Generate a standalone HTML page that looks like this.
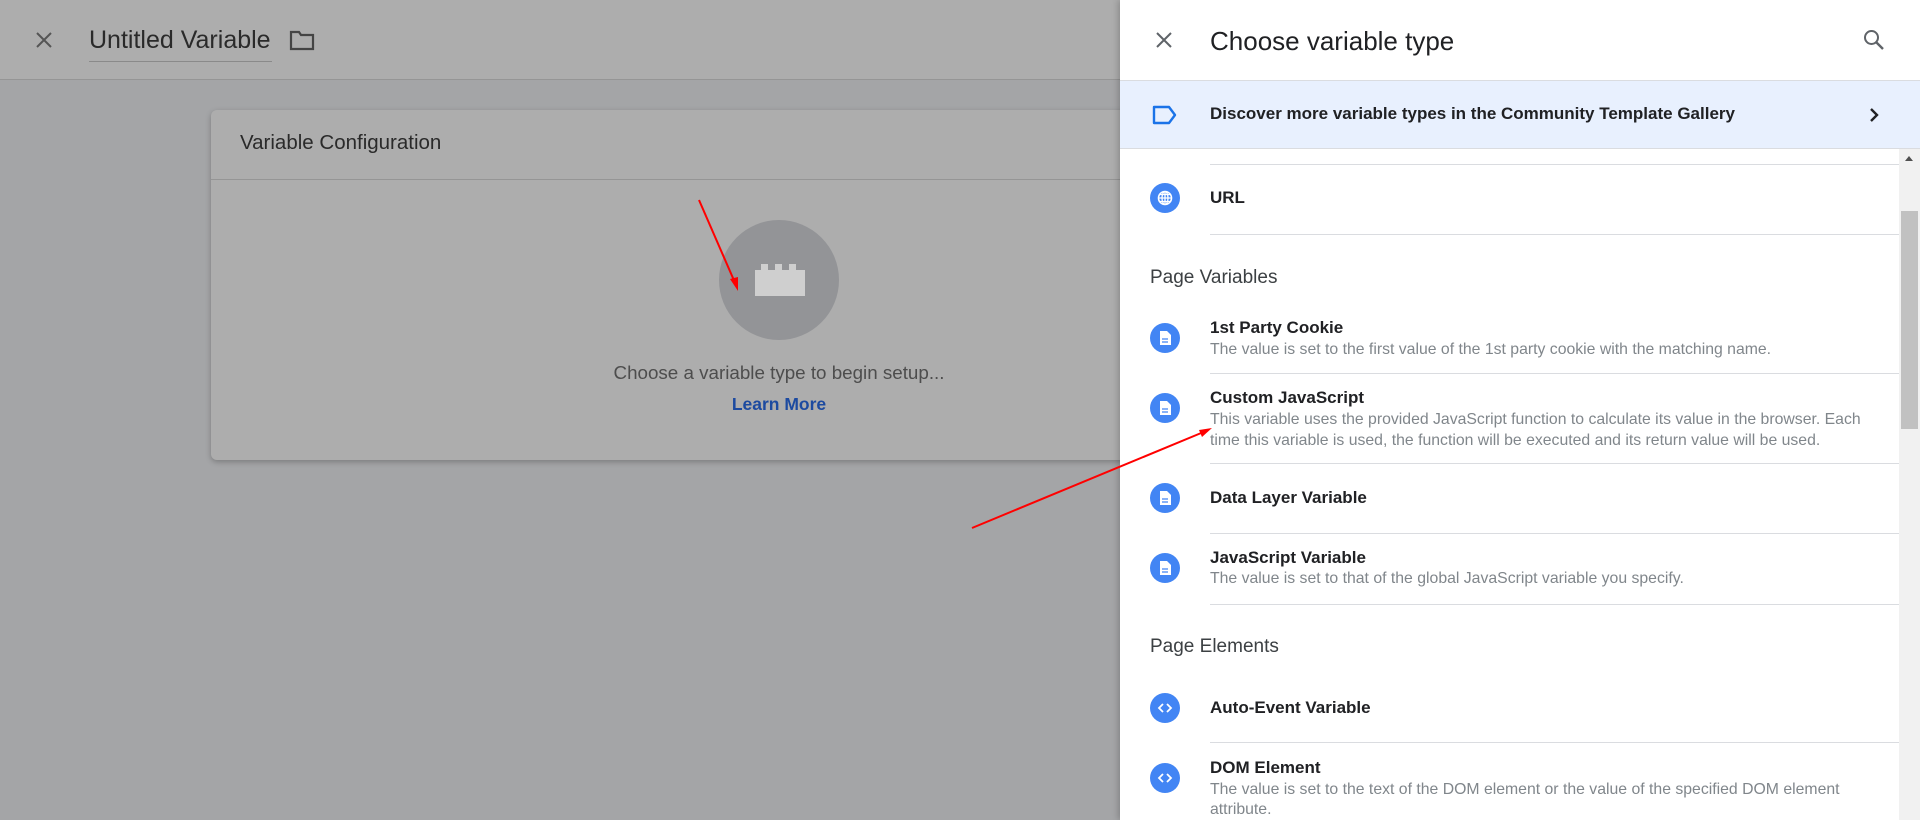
<!DOCTYPE html>
<html><head><meta charset="utf-8"><style>
*{margin:0;padding:0;box-sizing:border-box}
body{width:1920px;height:820px;overflow:hidden;position:relative;background:#a4a5a7;font-family:"Liberation Sans",Arial,sans-serif}
.a{position:absolute;white-space:nowrap}
.top{left:0;top:0;width:1120px;height:80px;background:#adadad;border-bottom:1px solid #959595}
.card{left:211px;top:110px;width:950px;height:350px;background:#adadad;border-radius:6px;box-shadow:0 2px 6px rgba(0,0,0,.25)}
.panel{left:1120px;top:0;width:800px;height:820px;background:#fff;box-shadow:-2px 0 6px rgba(0,0,0,.2)}
.t{font-size:17px;color:#202124;font-weight:bold;line-height:20px}
.d{font-size:15.8px;color:#80868b;line-height:21px}
.ic{width:30px;height:30px;border-radius:50%;background:#4285f4;left:1150px}
.ln{left:1210px;width:689px;height:1px;background:#dadce0}
.h{font-size:19px;color:#3c4043;left:1150px;line-height:22px}
</style></head><body>
<div class="a top"></div>
<svg class="a" style="left:34px;top:30px" width="20" height="20" viewBox="0 0 20 20"><path d="M3 3L17 17M17 3L3 17" stroke="#555" stroke-width="2"/></svg>
<div class="a" style="left:89px;top:26px;font-size:25px;color:#2a2a2a;line-height:28px">Untitled Variable</div>
<div class="a" style="left:89px;top:61px;width:183px;height:1px;background:#8a8a8a"></div>
<svg class="a" style="left:289px;top:28px" width="26" height="24" viewBox="0 0 26 24"><path d="M2 4h8l2 3h12v14H2z" fill="none" stroke="#444" stroke-width="2.2"/></svg>
<div class="a card"></div>
<div class="a" style="left:240px;top:132px;font-size:20.5px;color:#2a2a2a;line-height:22px">Variable Configuration</div>
<div class="a" style="left:211px;top:179px;width:909px;height:1px;background:#959595"></div>
<div class="a" style="left:719px;top:220px;width:120px;height:120px;border-radius:50%;background:#939497"></div>
<svg class="a" style="left:752px;top:262px" width="56" height="36" viewBox="0 0 56 36"><path d="M3 8h6V2h7v6h7V2h7v6h7V2h7v6h9v26H3z" fill="#cfcfcf"/></svg>
<div class="a" style="left:529px;top:363px;width:500px;text-align:center;font-size:18.8px;color:#4d4d4d;line-height:20px">Choose a variable type to begin setup...</div>
<div class="a" style="left:579px;top:394px;width:400px;text-align:center;font-size:17.5px;color:#1c4aa0;font-weight:bold;line-height:20px">Learn More</div>
<div class="a panel"></div>
<svg class="a" style="left:1154px;top:30px" width="20" height="20" viewBox="0 0 20 20"><path d="M3 3L17 17M17 3L3 17" stroke="#5f6368" stroke-width="2"/></svg>
<div class="a" style="left:1210px;top:26px;font-size:26px;color:#202124;line-height:30px">Choose variable type</div>
<svg class="a" style="left:1862px;top:28px" width="24" height="24" viewBox="0 0 24 24"><circle cx="9.5" cy="9.5" r="6.5" fill="none" stroke="#5f6368" stroke-width="2"/><path d="M14.5 14.5L21 21" stroke="#5f6368" stroke-width="2.4"/></svg>
<div class="a" style="left:1120px;top:80px;width:800px;height:69px;background:#e8f0fe;border-top:1px solid #dadce0;border-bottom:1px solid #dadce0"></div>
<svg class="a" style="left:1152px;top:104px" width="26" height="22" viewBox="0 0 26 22"><path d="M2 3h15l6 8-6 8H2z" fill="none" stroke="#1a73e8" stroke-width="2.4" stroke-linejoin="round"/></svg>
<div class="a t" style="left:1210px;top:104px">Discover more variable types in the Community Template Gallery</div>
<svg class="a" style="left:1866px;top:104px" width="16" height="22" viewBox="0 0 16 22"><path d="M5 5l6 6-6 6" fill="none" stroke="#202124" stroke-width="2.4"/></svg>
<div class="a" style="left:1899px;top:149px;width:21px;height:671px;background:#f1f1f1"></div>
<div class="a" style="left:1901px;top:211px;width:17px;height:218px;background:#c1c1c1"></div>
<svg class="a" style="left:1904px;top:154px" width="10" height="8"><path d="M1 7L5 2L9 7z" fill="#505050"/></svg>
<div class="a ln" style="top:164px"></div>
<div class="a ic" style="top:183px"></div>
<svg class="a" style="left:1156px;top:189px" width="18" height="18" viewBox="0 0 18 18"><circle cx="9" cy="9" r="6.5" fill="none" stroke="#fff" stroke-width="1.6"/><path d="M2.5 9h13M9 2.5v13M4 5.5h10M4 12.5h10" stroke="#fff" stroke-width="1.3"/><ellipse cx="9" cy="9" rx="3" ry="6.5" fill="none" stroke="#fff" stroke-width="1.3"/></svg>
<div class="a t" style="left:1210px;top:188px">URL</div>
<div class="a ln" style="top:234px"></div>
<div class="a h" style="top:267px">Page Variables</div>

<div class="a ic" style="top:323px"></div>
<div class="a t" style="left:1210px;top:318px">1st Party Cookie</div>
<div class="a d" style="left:1210px;top:339px">The value is set to the first value of the 1st party cookie with the matching name.</div>
<div class="a ln" style="top:373px"></div>

<div class="a ic" style="top:393px"></div>
<div class="a t" style="left:1210px;top:388px">Custom JavaScript</div>
<div class="a d" style="left:1210px;top:409px">This variable uses the provided JavaScript function to calculate its value in the browser. Each</div>
<div class="a d" style="left:1210px;top:430px">time this variable is used, the function will be executed and its return value will be used.</div>
<div class="a ln" style="top:463px"></div>

<div class="a ic" style="top:483px"></div>
<div class="a t" style="left:1210px;top:488px">Data Layer Variable</div>
<div class="a ln" style="top:533px"></div>

<div class="a ic" style="top:553px"></div>
<div class="a t" style="left:1210px;top:548px">JavaScript Variable</div>
<div class="a d" style="left:1210px;top:568px">The value is set to that of the global JavaScript variable you specify.</div>
<div class="a ln" style="top:604px"></div>

<div class="a h" style="top:636px">Page Elements</div>

<div class="a ic" style="top:693px"></div>
<div class="a t" style="left:1210px;top:698px">Auto-Event Variable</div>
<div class="a ln" style="top:742px"></div>

<div class="a ic" style="top:763px"></div>
<div class="a t" style="left:1210px;top:758px">DOM Element</div>
<div class="a d" style="left:1210px;top:779px">The value is set to the text of the DOM element or the value of the specified DOM element</div>
<div class="a d" style="left:1210px;top:799px">attribute.</div>

<svg class="a" style="left:0;top:0" width="1920" height="820">
<defs>
<g id="doc"><path d="M-5-7h7l4 4v10h-11z" fill="#fff"/><path d="M-3 1h6M-3 4h6" stroke="#4285f4" stroke-width="1.3"/></g>
<g id="code"><path d="M-2-4l-4 4 4 4M2-4l4 4-4 4" fill="none" stroke="#fff" stroke-width="1.8"/></g>
</defs>
<use href="#doc" x="1165" y="338"/><use href="#doc" x="1165" y="408"/><use href="#doc" x="1165" y="498"/><use href="#doc" x="1165" y="568"/>
<use href="#code" x="1165" y="708"/><use href="#code" x="1165" y="778"/>
<path d="M699 200L736 285" stroke="#f00" stroke-width="2"/><path d="M738 291l-8-12 8-2z" fill="#f00"/>
<path d="M972 528L1206 431" stroke="#f00" stroke-width="2"/><path d="M1212 428l-10 9-3-7z" fill="#f00"/>
</svg>
</body></html>
